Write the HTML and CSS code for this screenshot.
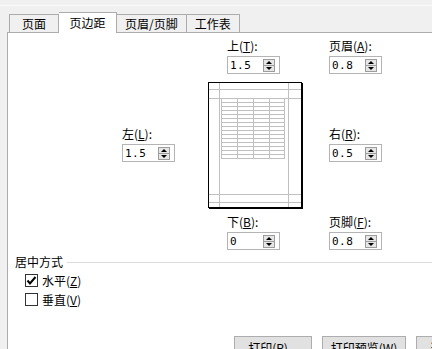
FILE: index.html
```html
<!doctype html>
<html lang="zh-CN">
  <head>
    <meta charset="utf-8" />
    <title>页面设置 - 页边距</title>
    <link rel="stylesheet" href="styles.css">
  </head>
  <body>
    <div class="topline"></div>
    <!-- tab strip -->
    <div class="tabs">
      <div class="tab">页面</div>
      <div class="tab active">页边距</div>
      <div class="tab">页眉/页脚</div>
      <div class="tab">工作表</div>
    </div>
    <div class="panel">
      <div class="margins">
        <div class="field f-top">
          <label>上(<u>T</u>):</label>
          <div class="spin"><span class="val">1.5</span><span class="spinBtn"><i class="up"></i><i class="down"></i></span></div>
        </div>
        <div class="field f-header">
          <label>页眉(<u>A</u>):</label>
          <div class="spin"><span class="val">0.8</span><span class="spinBtn"><i class="up"></i><i class="down"></i></span></div>
        </div>
        <div class="field f-left">
          <label>左(<u>L</u>):</label>
          <div class="spin"><span class="val">1.5</span><span class="spinBtn"><i class="up"></i><i class="down"></i></span></div>
        </div>
        <div class="preview">
          <svg width="92" height="124" viewBox="0 0 92 124">
            <path class="guide" d="M10.5 0V124M79.5 0V124M0 6.5H92M0 15.5H92M0 111.5H92M0 119.5H92" />
            <rect class="grid" x="12.5" y="15.5" width="63" height="60" />
            <path class="grid" d="M28.5 15.5V75.5M44.5 15.5V75.5M60.5 15.5V75.5
              M12.5 19.5H75.5M12.5 23.5H75.5M12.5 27.5H75.5M12.5 31.5H75.5M12.5 35.5H75.5
              M12.5 39.5H75.5M12.5 43.5H75.5M12.5 47.5H75.5M12.5 51.5H75.5M12.5 55.5H75.5
              M12.5 59.5H75.5M12.5 63.5H75.5M12.5 67.5H75.5M12.5 71.5H75.5" />
          </svg>
        </div>
        <div class="field f-right">
          <label>右(<u>R</u>):</label>
          <div class="spin"><span class="val">0.5</span><span class="spinBtn"><i class="up"></i><i class="down"></i></span></div>
        </div>
        <div class="field f-bottom">
          <label>下(<u>B</u>):</label>
          <div class="spin"><span class="val">0</span><span class="spinBtn"><i class="up"></i><i class="down"></i></span></div>
        </div>
        <div class="field f-footer">
          <label>页脚(<u>F</u>):</label>
          <div class="spin"><span class="val">0.8</span><span class="spinBtn"><i class="up"></i><i class="down"></i></span></div>
        </div>
      </div>

      <div class="group">
        <span>居中方式</span>
        <span class="rule"></span>
      </div>
      <div class="checks">
        <div class="check">
          <span class="box">
            <svg width="11" height="11" viewBox="0 0 11 11"><path d="M1.5 5.5L4 8.5L9.5 2" /></svg>
          </span>
          <span>水平(<u>Z</u>)</span>
        </div>
        <div class="check">
          <span class="box"></span>
          <span>垂直(<u>V</u>)</span>
        </div>
      </div>

      <div class="buttons">
        <button class="btnPrint">打印(<u>P</u>)...</button>
        <button class="btnPreview">打印预览(<u>W</u>)</button>
        <button class="btnOptions">选项(<u>O</u>)...</button>
      </div>
    </div>
  </body>
</html>
```

FILE: styles.css
```css
* {
  box-sizing: border-box;
}
html,
body {
  height: 100%;
}
body {
  margin: 0;
  background: #f0f0f0;
  color: #000;
  font-family: "Noto Sans CJK SC", "Liberation Sans", sans-serif;
  font-size: 12px;
  overflow: hidden;
}
u {
  text-decoration: underline;
}
.topline {
  height: 6px;
  border-bottom: 1px solid #fbfbfb;
}
/* Tabs */
.tabs {
  display: flex;
  align-items: flex-end;
  height: 26px;
  padding-left: 9px;
}
.tab {
  height: 18px;
  min-width: 50px;
  padding: 0 8px;
  border: 1px solid #acacac;
  border-bottom: none;
  border-left: none;
  background: #f0f0f0;
  text-align: center;
  line-height: 17px;
  white-space: nowrap;
}
.tab:first-child {
  border-left: 1px solid #acacac;
}
.tab.active {
  height: 21px;
  min-width: 58px;
  margin-bottom: -1px;
  background: #fff;
  line-height: 20px;
  position: relative;
  z-index: 1;
}
/* Panel */
.panel {
  height: calc(100% - 32px);
  margin-left: 7px;
  background: #fff;
  border-top: 1px solid #acacac;
  border-left: 1px solid #acacac;
  overflow: hidden;
}
.margins {
  display: grid;
  grid-template-columns: 86px 19px 102px 80px;
  grid-template-rows: 44px 132px auto;
  margin-left: 114px;
  padding-top: 5px;
}
.field label {
  display: block;
  height: 16px;
  line-height: 16px;
  margin-bottom: 2px;
  white-space: nowrap;
}
.f-top { grid-column: 3; grid-row: 1; }
.f-header { grid-column: 4; grid-row: 1; }
.f-left { grid-column: 1; grid-row: 2; margin-top: 44px; }
.f-right { grid-column: 4; grid-row: 2; margin-top: 44px; }
.f-bottom { grid-column: 3; grid-row: 3; }
.f-footer { grid-column: 4; grid-row: 3; }
.spin {
  display: flex;
  align-items: center;
  width: 53px;
  height: 18px;
  border: 1px solid #b4b4b4;
  padding: 0 4px 0 2px;
}
.spin .val {
  flex: 1;
  font-family: "DejaVu Sans Mono", monospace;
  font-size: 11px;
  letter-spacing: 0.5px;
}
.spinBtn {
  display: flex;
  flex-direction: column;
  width: 12px;
  height: 13px;
  border: 1px solid #9c9c9c;
  background: #e6e6e6;
}
.spinBtn i {
  flex: 1;
  display: flex;
  align-items: center;
  justify-content: center;
}
.spinBtn i.down {
  border-top: 1px solid #9c9c9c;
}
.spinBtn i.up::after,
.spinBtn i.down::after {
  content: "";
  width: 0;
  height: 0;
  border-left: 3px solid transparent;
  border-right: 3px solid transparent;
}
.spinBtn i.up::after {
  border-bottom: 3px solid #000;
}
.spinBtn i.down::after {
  border-top: 3px solid #000;
}
/* page preview */
.preview {
  grid-column: 2 / 4;
  grid-row: 2;
  width: 94px;
  height: 126px;
  border: 1px solid #000;
  box-shadow: 1px 1px 0 #000;
  background: #fff;
}
.preview svg {
  display: block;
}
.preview .guide,
.preview .grid {
  fill: none;
  stroke: #c0c0c0;
  stroke-width: 1;
}
/* centering group */
.group {
  display: flex;
  align-items: center;
  gap: 4px;
  height: 16px;
  margin-top: 4px;
  padding-left: 7px;
  line-height: 16px;
}
.group .rule {
  flex: 1;
  height: 1px;
  background: #dcdcdc;
}
.checks {
  padding-left: 17px;
  margin-top: 1px;
}
.check {
  display: flex;
  align-items: center;
  gap: 4px;
  height: 19px;
}
.check .box {
  display: flex;
  align-items: center;
  justify-content: center;
  width: 13px;
  height: 13px;
  border: 1px solid #333;
  background: #fff;
}
.check .box path {
  fill: none;
  stroke: #000;
  stroke-width: 2;
}
/* bottom buttons */
.buttons {
  display: flex;
  gap: 10px;
  margin-top: 27px;
  padding-left: 226px;
  white-space: nowrap;
}
button {
  flex: none;
  height: 23px;
  padding: 0;
  border: 1px solid #adadad;
  background: #e1e1e1;
  color: #000;
  font-family: inherit;
  font-size: 12px;
}
.btnPrint {
  width: 78px;
}
.btnPreview {
  width: 84px;
}
.btnOptions {
  width: 80px;
}
```
